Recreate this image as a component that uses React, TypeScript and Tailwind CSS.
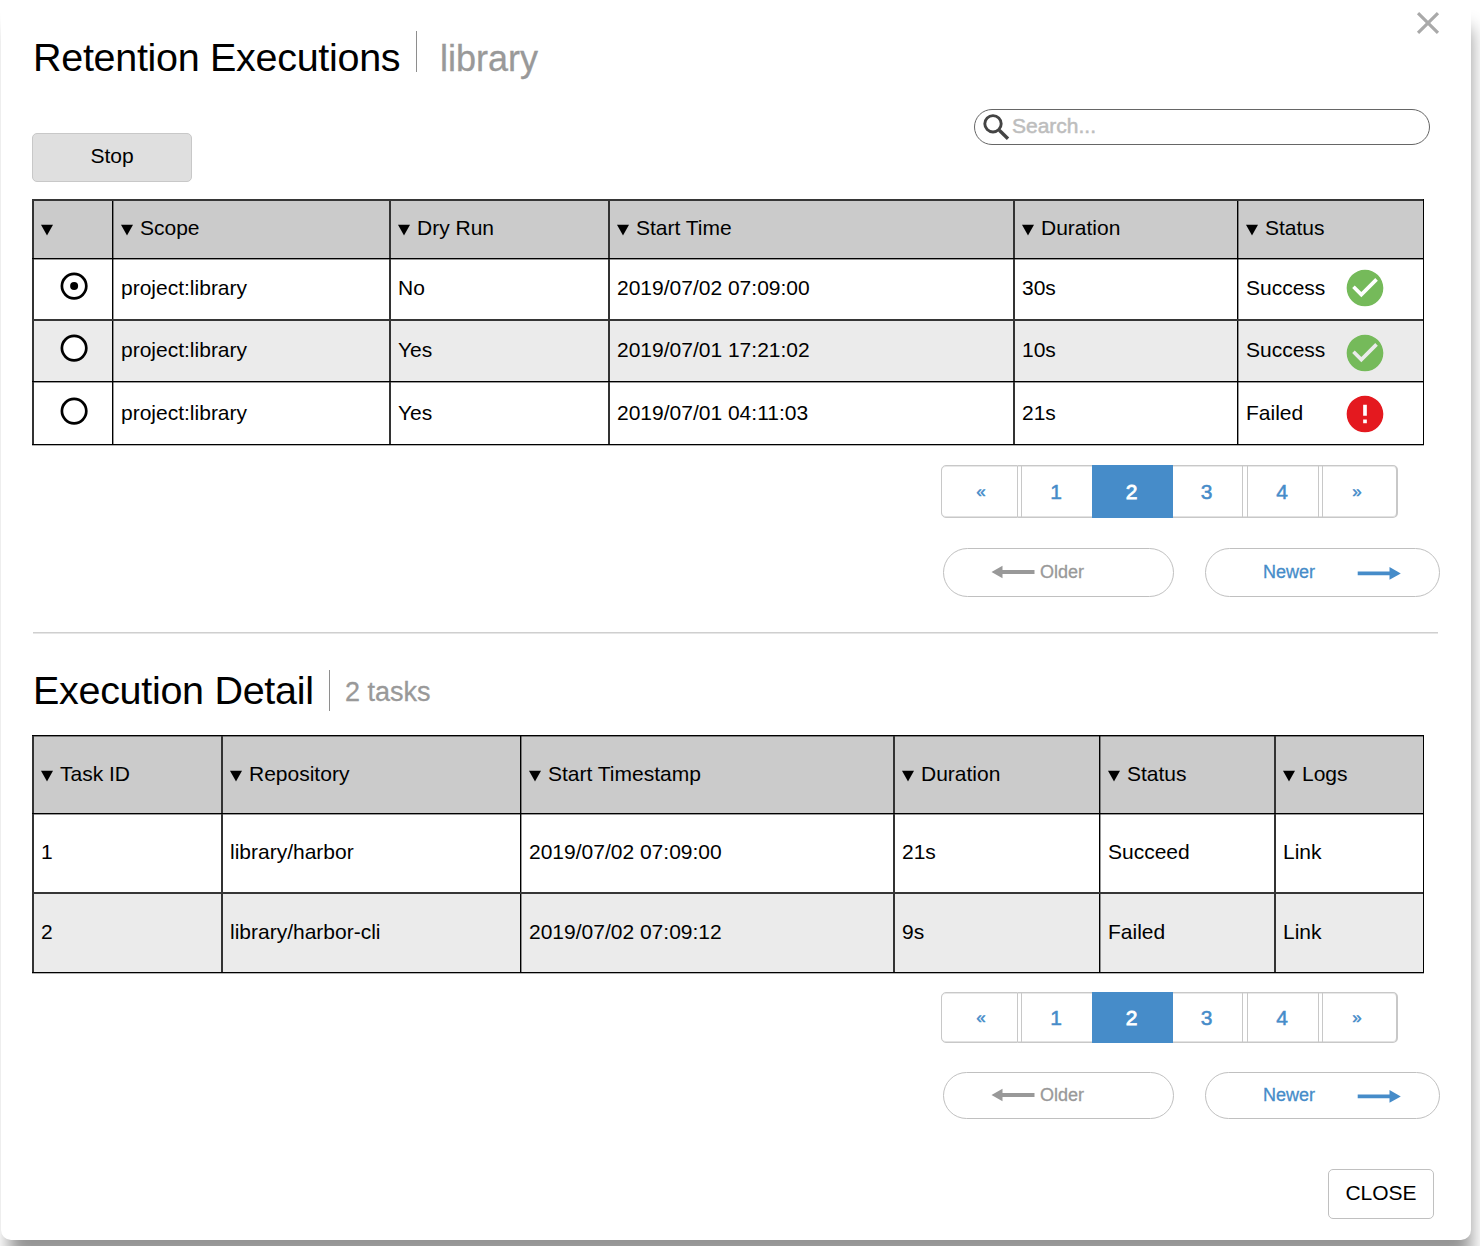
import { MdCheckCircle, MdClose, MdError } from "react-icons/md";

const THICK_T = "border-t-2 border-[#363636]";
const THIN_T = "border-t border-black shadow-[inset_0_1px_0_rgba(0,0,0,0.4)]";
const THICK_L = "border-l-2 border-[#333] pl-[7px]";
const THIN_L = "border-l border-black shadow-[inset_1px_0_0_rgba(0,0,0,0.4)] pl-[8px]";

type Row = { box: string; cells: string[]; radio?: "on" | "off"; icon?: "ok" | "fail"; iconPos?: string };

function Triangle() {
  return (
    <svg className="mt-[8px] mr-[7px] h-[12px] w-[12px] shrink-0" viewBox="0 0 12 12">
      <path d="M0 .8h12L6 11.4z" fill="#000" />
    </svg>
  );
}

function Radio({ on }: { on: boolean }) {
  return (
    <svg className="-mt-[4px] ml-[19px] h-[28px] w-[28px]" viewBox="0 0 28 28">
      <circle cx="14.1" cy="14.1" r="12.2" fill="#fff" stroke="#000" strokeWidth="2.7" />
      {on && <circle cx="14.1" cy="14.1" r="4" fill="#000" />}
    </svg>
  );
}

function Table({ cols, lines, head, headBox, rows }: { cols: string; lines: string[]; head: string[]; headBox: string; rows: Row[] }) {
  return (
    <div className="w-[1392px] border-r border-b border-black text-[21px] leading-[24px] shadow-[0_1px_0_rgba(0,0,0,0.3)]">
      <div className={`grid bg-[#cbcbcb] ${cols} ${headBox}`}>
        {head.map((h, i) => (
          <div key={i} className={`flex whitespace-nowrap [padding-top:inherit] ${lines[i]}`}>
            <Triangle />
            {h}
          </div>
        ))}
      </div>
      {rows.map((r, k) => (
        <div key={k} className={`grid ${cols} ${r.box}`}>
          {r.cells.map((c, i) => (
            <div key={i} className={`relative whitespace-nowrap [padding-top:inherit] ${lines[i]}`}>
              {i === 0 && r.radio ? <Radio on={r.radio === "on"} /> : c}
              {i === r.cells.length - 1 && r.icon === "ok" && (
                <MdCheckCircle size={44} className={`absolute left-[105px] text-[#75ba5a] ${r.iconPos}`} />
              )}
              {i === r.cells.length - 1 && r.icon === "fail" && (
                <MdError size={44} className={`absolute left-[105px] text-[#e4191f] ${r.iconPos}`} />
              )}
            </div>
          ))}
        </div>
      ))}
    </div>
  );
}

function Pager({ box, num }: { box: string; num: string }) {
  const cell = "flex justify-center border-y border-[#c8c8c8] shadow-[inset_0_-1px_0_#e2e2e2,inset_0_1px_0_#e8e8e8] ";
  const gap = "border-y border-[#c8c8c8] shadow-[inset_0_-1px_0_#e2e2e2,inset_0_1px_0_#e8e8e8]";
  return (
    <div className={`ml-[909px] flex text-[21px] leading-[24px] text-[#468cc9] [-webkit-text-stroke:0.5px_#468cc9] ${box}`}>
      <div className={`${cell} w-[77px] rounded-l-[5px] border-x pl-[3px] text-[17px] ${num}`}>«</div>
      <div className={`w-[3px] ${gap}`} />
      <div className={`${cell} w-[71px] border-l pr-[2px] ${num}`}>1</div>
      <div className={`flex w-[81px] justify-center bg-[#468cc9] pr-[2px] text-white [-webkit-text-stroke:0.8px_#fff] ${num}`}>
        <span className="mt-px">2</span>
      </div>
      <div className={`${cell} w-[70px] border-r pr-[2px] ${num}`}>3</div>
      <div className={`w-[4px] ${gap}`} />
      <div className={`${cell} w-[72px] border-x pr-[2px] ${num}`}>4</div>
      <div className={`w-[3px] ${gap}`} />
      <div className={`${cell} w-[76px] rounded-r-[5px] border-l border-r-2 pr-[5px] text-[17px] ${num}`}>»</div>
    </div>
  );
}

function OlderNewer({ box, text }: { box: string; text: string }) {
  return (
    <div className={`ml-[911px] flex gap-[31px] text-[18px] leading-[20px] ${box}`}>
      <div className={`flex h-full w-[231px] rounded-full border border-[#c0c0c0] pl-[47px] text-[#999] [-webkit-text-stroke:0.3px_#999] ${text}`}>
        <svg className="mt-[3px] mr-[5px] h-[14px] w-[44px]" viewBox="0 0 44 14">
          <path d="M.5 7 11.5.7v4.4H43.5v3.8H11.5v4.4z" fill="#999" />
        </svg>
        Older
      </div>
      <div className={`flex h-full w-[235px] rounded-full border border-[#c0c0c0] pl-[57px] text-[#468cc9] [-webkit-text-stroke:0.3px_#468cc9] ${text}`}>
        <span className="w-[94px]">Newer</span>
        <svg className="mt-[4px] h-[14px] w-[44px]" viewBox="0 0 44 14">
          <path d="M43.8 7.4 32.5 1.1v4.4H.7v3.8h31.8v4.4z" fill="#468cc9" />
        </svg>
      </div>
    </div>
  );
}

export default function App() {
  return (
    <div className="h-[1246px] w-[1480px] overflow-hidden bg-white text-black [font-family:'Liberation_Sans',Arial,sans-serif]">
      <div className="relative ml-px flex h-[1240px] w-[1470px] flex-col rounded-b-[10px] bg-white pl-[31px] shadow-[4px_24px_18px_-4px_rgba(0,0,0,0.42)]">
        <MdClose size={38} className="absolute left-[1407.5px] top-[4px] text-[#a9a9a9]" />

        <header className="flex h-[109px] pt-[31px]">
          <h1 className="w-[384px] pl-px pt-[4px] text-[39.5px] leading-[44px] tracking-[-0.3px] whitespace-nowrap">Retention Executions</h1>
          <div className="h-[41px] w-px bg-[#8e8e8e]" />
          <div className="pl-[23px] pt-[6px] text-[36px] leading-[44px] text-[#999] [-webkit-text-stroke:0.3px_#999]">library</div>
        </header>

        <div className="flex h-[90px]">
          <button className="mt-[24px] h-[49px] w-[160px] rounded-[5px] border border-[#c8c8c8] bg-[#dfdfdf] pb-[3px] text-[21px]">Stop</button>
          <div className="ml-[782px] flex h-[36px] w-[456px] rounded-full border border-[#666] pl-[8px] text-[21px] leading-[24px] text-[#bdbdbd] [-webkit-text-stroke:0.5px_#bdbdbd]">
            <svg className="mt-[4px] h-[27px] w-[27px]" viewBox="0 0 27 27" fill="none" stroke="#444">
              <circle cx="10" cy="9.8" r="8.2" strokeWidth="2.9" />
              <path d="M16.3 16.3 25 24.8" strokeWidth="3.4" />
            </svg>
            <span className="ml-[2px] pt-[4px]">Search...</span>
          </div>
        </div>

        <Table
          cols="grid-cols-[80px_277px_219px_405px_224px_186px]"
          lines={[THICK_L, THIN_L, THICK_L, THICK_L, THICK_L, THIN_L]}
          head={["", "Scope", "Dry Run", "Start Time", "Duration", "Status"]}
          headBox={`h-[59px] pt-[15px] [&>*]:-mt-[15px] ${THICK_T}`}
          rows={[
            { box: `h-[61px] pt-[17px] [&>*]:-mt-[17px] ${THIN_T}`, cells: ["", "project:library", "No", "2019/07/02 07:09:00", "30s", "Success"], radio: "on", icon: "ok", iconPos: "top-[7px]" },
            { box: `h-[62px] bg-[#ebebeb] pt-[17px] [&>*]:-mt-[17px] ${THICK_T}`, cells: ["", "project:library", "Yes", "2019/07/01 17:21:02", "10s", "Success"], radio: "off", icon: "ok", iconPos: "top-[10px]" },
            { box: `h-[63px] pt-[19px] [&>*]:-mt-[19px] ${THIN_T}`, cells: ["", "project:library", "Yes", "2019/07/01 04:11:03", "21s", "Failed"], radio: "off", icon: "fail", iconPos: "top-[10px]" },
          ]}
        />

        <Pager box="mt-[20px] h-[53px]" num="pt-[14px]" />
        <OlderNewer box="mt-[30px] h-[49px]" text="pt-[13px]" />

        <div className="mt-[35px] ml-px h-px w-[1405px] shrink-0 bg-[#cfcfcf] shadow-[0_1px_0_#e6e6e6]" />

        <div className="flex h-[102px] shrink-0 pt-[37px]">
          <h2 className="-mt-[2px] w-[297px] pl-px text-[39.5px] leading-[44px] tracking-[-0.3px] whitespace-nowrap">Execution Detail</h2>
          <div className="h-[41px] w-px bg-[#8e8e8e]" />
          <div className="pl-[15px] pt-[7px] text-[27px] leading-[30px] text-[#999] [-webkit-text-stroke:0.3px_#999]">2 tasks</div>
        </div>

        <Table
          cols="grid-cols-[189px_299px_373px_206px_175px_149px]"
          lines={[THICK_L, THICK_L, THIN_L, THICK_L, THIN_L, THICK_L]}
          head={["Task ID", "Repository", "Start Timestamp", "Duration", "Status", "Logs"]}
          headBox={`h-[78px] pt-[26px] [&>*]:-mt-[26px] ${THIN_T}`}
          rows={[
            { box: `h-[79px] pt-[26px] [&>*]:-mt-[26px] ${THIN_T}`, cells: ["1", "library/harbor", "2019/07/02 07:09:00", "21s", "Succeed", "Link"] },
            { box: `h-[80px] bg-[#ebebeb] pt-[26px] [&>*]:-mt-[26px] ${THICK_T}`, cells: ["2", "library/harbor-cli", "2019/07/02 07:09:12", "9s", "Failed", "Link"] },
          ]}
        />

        <Pager box="mt-[19px] h-[51px]" num="pt-[13px]" />
        <OlderNewer box="mt-[29px] h-[47px]" text="pt-[12px]" />

        <button className="mt-[50px] ml-[1296px] h-[50px] w-[106px] shrink-0 rounded-[5px] border border-[#c0c0c0] pb-[3px] text-[21px]">CLOSE</button>
      </div>
    </div>
  );
}
